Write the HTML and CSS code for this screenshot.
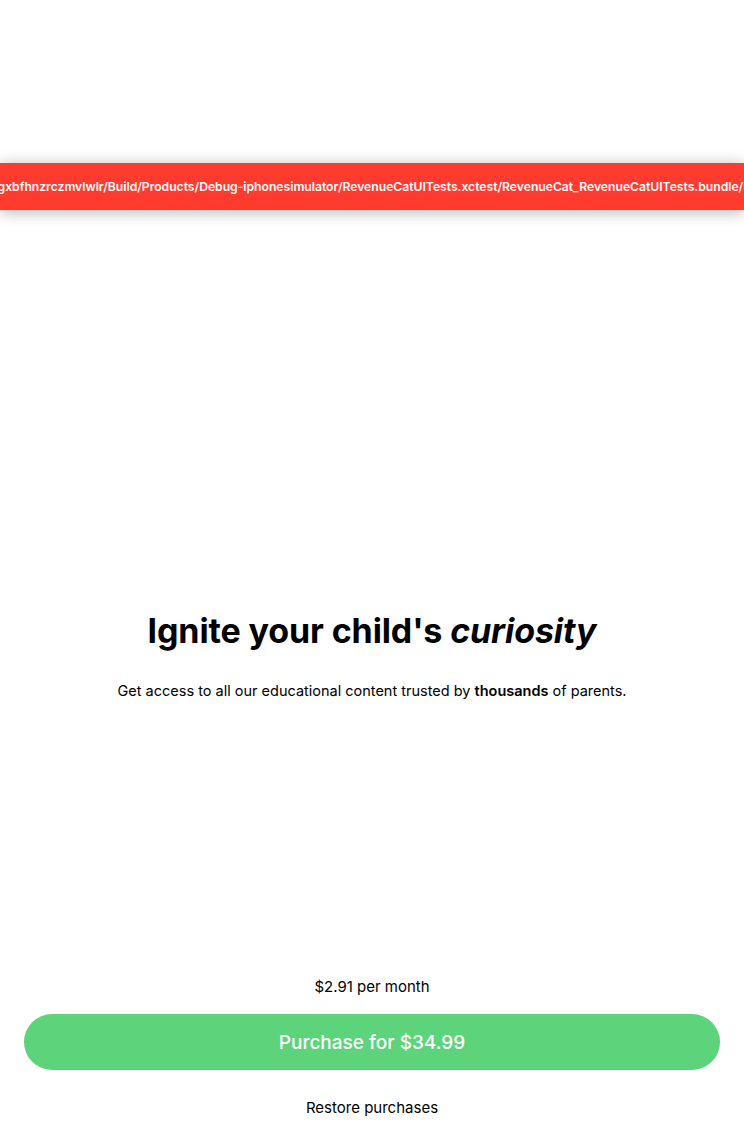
FILE: index.html
```html
<!DOCTYPE html>
<html>
<head>
<meta charset="utf-8">
<link rel="stylesheet" href="styles.css">
</head>
<body>
<div class="page">
  <div class="banner">
    <span class="banner-text">Cat-gxbfhnzrczmvlwlr/Build/Products/Debug-iphonesimulator/RevenueCatUITests.xctest/RevenueCat_RevenueCatUITests.bundle/Imag</span>
  </div>
  <main class="hero">
    <h1 class="title">Ignite your child's <em>curiosity</em></h1>
    <p class="subtitle">Get access to all our educational content trusted by <strong>thousands</strong> of parents.</p>
  </main>
  <footer class="footer">
    <p class="price">$2.91 per month</p>
    <button class="purchase">Purchase for $34.99</button>
    <p class="restore">Restore purchases</p>
  </footer>
</div>
</body>
</html>
```

FILE: styles.css
```css
html, body {
  margin: 0;
  padding: 0;
  background: #ffffff;
}
body {
  font-family: Inter, "Noto Sans", sans-serif;
  color: #000;
}
.page {
  height: 1130px;
  display: flex;
  flex-direction: column;
  padding-top: 163px;
  box-sizing: border-box;
  overflow: hidden;
}
.banner {
  height: 47px;
  background: #ff3b30;
  display: flex;
  align-items: center;
  justify-content: center;
  overflow: hidden;
  box-shadow: 0 2px 14px rgba(0, 0, 0, 0.3);
  flex-shrink: 0;
}
.banner-text {
  color: #fff;
  font-size: 12.15px;
  font-weight: 600;
  white-space: nowrap;
  flex-shrink: 0;
}
.hero {
  margin-top: 400px;
  display: flex;
  flex-direction: column;
  align-items: center;
}
.title {
  margin: 0;
  font-size: 34px;
  line-height: 41px;
  font-weight: 700;
  letter-spacing: -0.12px;
}
.title em {
  font-style: italic;
}
.subtitle {
  margin: 30px 0 0;
  font-size: 14.5px;
  line-height: 20px;
}
.subtitle strong {
  font-weight: 600;
}
.footer {
  margin-top: auto;
  padding: 0 24px 12px;
  display: flex;
  flex-direction: column;
  align-items: center;
}
.price {
  margin: 0;
  font-size: 15px;
  line-height: 20px;
}
.purchase {
  margin-top: 17px;
  width: 100%;
  height: 56px;
  border: none;
  border-radius: 28px;
  background: #5dd37c;
  color: #fff;
  font-family: Inter, "Noto Sans", sans-serif;
  font-size: 19px;
  font-weight: 500;
}
.restore {
  margin: 28px 0 0;
  font-size: 15px;
  line-height: 20px;
}
```
